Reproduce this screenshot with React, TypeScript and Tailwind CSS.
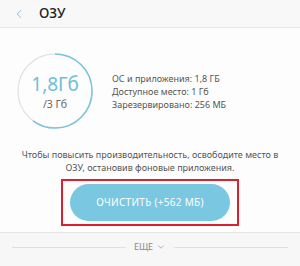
import { ChevronLeft, ChevronDown } from "lucide-react";

const RamRing = () => {
  const r = 38;
  const c = 2 * Math.PI * r;
  const used = 1.8 / 3;
  return (
    <div className="relative w-[78px] h-[78px] shrink-0">
      <svg width="78" height="78" viewBox="0 0 80 80" className="absolute inset-0">
        <circle cx="40" cy="40" r={r} fill="none" stroke="#e2e2e2" strokeWidth="1.3" />
        <circle
          cx="40"
          cy="40"
          r={r}
          fill="none"
          stroke="#7cc5dc"
          strokeWidth="1.6"
          strokeDasharray={`${c * used} ${c}`}
          transform="rotate(-90 40 40)"
        />
      </svg>
      <div className="absolute inset-0 flex flex-col items-center justify-center">
        <span className="text-[19px] leading-[22px] text-[#6fbfd6]">1,8Гб</span>
        <span className="mt-[3px] text-[10.5px] leading-[12px] text-[#666]">/3 Гб</span>
      </div>
    </div>
  );
};

export default function App() {
  return (
    <div
      className="w-[300px] h-[266px] bg-[#fdfdfd] flex flex-col overflow-hidden"
      style={{ fontFamily: '"Noto Sans", "Open Sans", sans-serif' }}
    >
      {/* Header */}
      <header className="h-[28px] bg-[#f8f8f8] border-b border-[#e6e6e6] flex items-center shrink-0">
        <ChevronLeft className="ml-[12px] w-[14px] h-[14px] text-[#6bb8d4]" strokeWidth={1.5} />
        <span className="ml-[13px] text-[13.5px] font-medium text-[#222]">ОЗУ</span>
      </header>

      {/* RAM summary */}
      <div className="flex items-center pl-[16px] pt-[24px]">
        <RamRing />
        <div className="ml-[18px] flex flex-col text-[9px] leading-[13px] text-[#555]">
          <span>ОС и приложения: 1,8 ГБ</span>
          <span>Доступное место: 1 Гб</span>
          <span>Зарезервировано: 256 МБ</span>
        </div>
      </div>

      <p className="mt-[18px] text-center text-[9px] leading-[13px] text-[#555] whitespace-nowrap">
        Чтобы повысить производительность, освободите место в
        <br />
        ОЗУ, остановив фоновые приложения.
      </p>

      <div className="flex justify-center mt-[5px]">
        <div className="border-2 border-[#d8222e] px-[7px] py-[3px] w-[178px]">
          <button className="w-full h-[37px] rounded-full bg-[#7ac7e1] text-white text-[10px] tracking-[0.3px]">
            ОЧИСТИТЬ (+562 МБ)
          </button>
        </div>
      </div>

      {/* More */}
      <div className="mt-[6px] flex-1 border-t border-[#e4e4e4] bg-[#f7f7f7] flex items-start pt-[8px] px-[12px]">
        <div className="flex items-center w-full">
          <div className="flex-1 h-px bg-[#e0e0e0]" />
          <span className="mx-[8px] flex items-center text-[9px] leading-[12px] text-[#888]">
            ЕЩЕ
            <ChevronDown className="ml-[3px] w-[10px] h-[10px]" strokeWidth={1.5} />
          </span>
          <div className="flex-1 h-px bg-[#e0e0e0]" />
        </div>
      </div>
    </div>
  );
}
